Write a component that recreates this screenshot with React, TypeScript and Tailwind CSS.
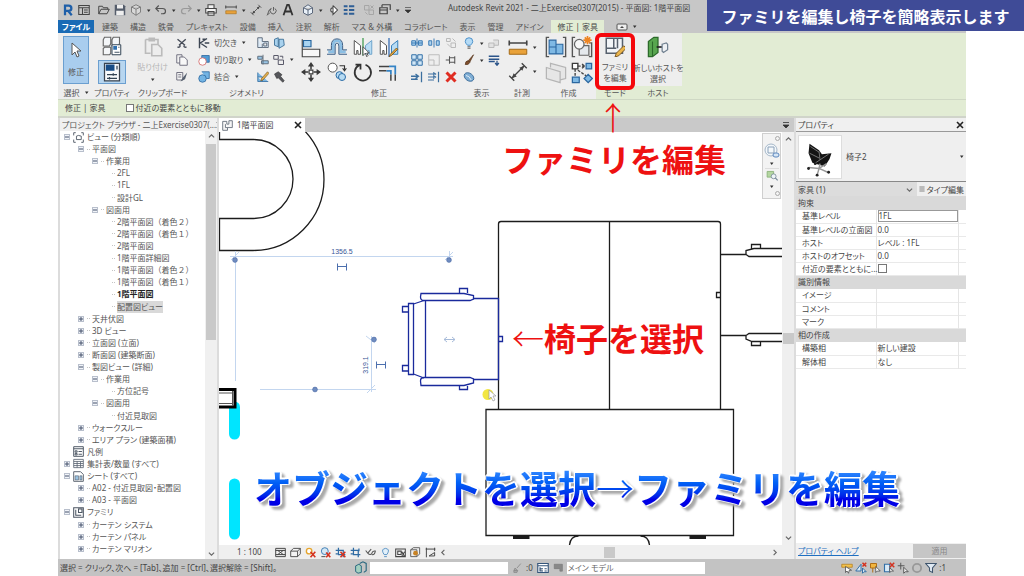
import type { ReactNode } from "react";

const icons: Record<string, ReactNode> = {
    revit: <path d="M4 15V2h5a3 3 0 0 1 0 7H4m4 0 5 6" fill="none" stroke="#1f5fa8" strokeWidth="3" />,
    window: <path d="M1 2h14v12H1zM1 5h14M6 5v9M8 8h5M8 11h5" fill="none" stroke="#444" strokeWidth="1.4" />,
    open: <path d="M1 13V3h5l1 2h6v2M1 13l3-6h11l-3 6z" fill="none" stroke="#444" strokeWidth="1.3" />,
    save: (
        <>
            <path d="M1 1h12l2 2v12H1z" fill="#555d6b" />
            <path d="M4 1h8v5H4zM3 9h10v6H3z" fill="#eee" />
        </>
    ),
    cube: <path d="M8 1l6 3v7l-6 4-6-4V4zM2 4l6 3 6-3M8 7v8" fill="#d8d8d8" stroke="#777" strokeWidth="1.2" />,
    home: <path d="M8 1l6 4v7l-6 3-6-3V5zM2 5l6 3 6-3M8 8v7" fill="#e8f0f8" stroke="#4f5b70" strokeWidth="1.2" />,
    undo: <path d="M5 2L1 6l4 4M1 6h9q4 0 4 3.500T10 13H8" fill="none" stroke="#555" strokeWidth="1.6" />,
    redo: <path d="M11 2l4 4-4 4M15 6H6q-4 0-4 3.500T6 13h2" fill="none" stroke="#999" strokeWidth="1.6" />,
    print: <path d="M4 6V1h8v5M1 6h14v6H1zM4 10h8v5H4z" fill="#f3f3f3" stroke="#444" strokeWidth="1.4" />,
    ruler: (
        <>
            <path d="M1 4h14M1 2v4M15 2v4" fill="none" stroke="#444" strokeWidth="1.3" />
            <path d="M1 9h14v4H1z" fill="#e9a23a" stroke="#a46b18" strokeWidth=".8" />
        </>
    ),
    measure: (
        <>
            <path d="M3 13L13 3M1 11l4 4M11 1l4 4" fill="none" stroke="#444" strokeWidth="1.100" />
            <path d="M3 13l1.500-4 2.500 2.500zM13 3L9 4.500 11.500 7z" fill="#444" />
        </>
    ),
    tag: <path d="M2 14q2-8 5-8M12 6a4 4 0 1 1-5 0M10 4v5M1 15l4-3" fill="none" stroke="#555" strokeWidth="1.2" />,
    textA: <path d="M2 15L7 1h2l5 14M4 10h8" fill="none" stroke="#333" strokeWidth="2.4" />,
    section: <path d="M8 2l6 6-6 6V2M8 5a3 3 0 1 0 0 6" fill="#fff" stroke="#444" strokeWidth="1.4" />,
    thin: <path d="M1 3h5M8 3h7M1 8h5M8 8h7M1 13h5M8 13h7" fill="none" stroke="#2f5f96" strokeWidth="2.4" />,
    closeHidden: <path d="M2 2h6v6H2zM8 8h6v6H8zM10 2l4 4M14 2l-4 4M3 11l3 3" fill="none" stroke="#a5a5a5" strokeWidth="1.3" />,
    switchWin: <path d="M4 1h11v7M4 1v3M1 5h10v8H1zM1 8h10" fill="none" stroke="#444" strokeWidth="1.6" />,
    cursor: <path d="M4 1v12l3-3 2 5 2-1-2-5h4z" fill="#fff" stroke="#555" strokeWidth="1" />,
    cubes: (
        <>
            <path d="M1 3l1-2h5v5L6 8H1zM8 3l1-2h5v5l-1 2H8zM1 10l1-1h5v5l-1 1H1z" fill="#f4f6f8" stroke="#666" strokeWidth=".9" />
            <path d="M8 7h7v8H8z" fill="#fff" stroke="#345" strokeWidth=".8" />
            <path d="M9 8h3v3H9z" fill="#2f6fae" />
            <path d="M10 13h4M13 9h1" stroke="#456" strokeWidth=".8" />
        </>
    ),
    props: (
        <>
            <path d="M2 1h12v14H2z" fill="#f7fafc" stroke="#39434f" strokeWidth="1" />
            <path d="M3 2h7v5H3z" fill="#174c86" />
            <path d="M12 3v3M4 10h8M4 13h8M9 9v2M6 12v2" stroke="#345" strokeWidth="1" />
        </>
    ),
    paste: <path d="M2 2h10v4M2 2v11h4M5 1h4v2H5zM7 6h5l3 3v6H7z" fill="#ededed" stroke="#bbb" strokeWidth="1.3" />,
    cut: <path d="M2 3l10 8M13 3L4 11M2 13a2 1.500 0 1 0 3-2M14 13a2 1.500 0 1 1-3-2" fill="none" stroke="#454b57" strokeWidth="1.8" />,
    copyDoc: <path d="M1 1h7v3M1 1v11h4M5 4h6l4 4v7H5z" fill="#f8f8f8" stroke="#667" strokeWidth="1.2" />,
    match: (
        <>
            <path d="M1 2h8v10H1zM3 5h4M3 8h4" fill="#f4f4f4" stroke="#667" strokeWidth="1.2" />
            <path d="M15 2l-6 7-3 5 6-3z" fill="#56606f" />
        </>
    ),
    cope: <path d="M2 1v14M3 8l9-6M3 8l9 6M6 3h4M9 8h6" fill="none" stroke="#3d4653" strokeWidth="1.9" />,
    cutGeo: (
        <>
            <path d="M5 2h10v9H5z" fill="#4f9bd4" stroke="#27629a" />
            <circle cx="6" cy="10" r="5" fill="#fff" stroke="#cf5a5a" />
        </>
    ),
    join: (
        <>
            <path d="M5 1h10v9h-4" fill="#73b4e4" stroke="#27629a" />
            <circle cx="6" cy="10" r="5" fill="#73b4e4" stroke="#27629a" />
        </>
    ),
    wallOpen: <path d="M1 1h6v5h8v8H7V9M1 1v13h6M9 8v4h4V8z" fill="#dceaf6" stroke="#4b5a6c" strokeWidth="1.1" />,
    split: <path d="M2 3l5-2v12l-5-2zM8 3h6l1 8-7 4z" fill="#a9d2ee" stroke="#31668f" strokeWidth="1.1" />,
    beam: <path d="M1 3h6v4H1zM6 9h9v4H6zM8 1v13" fill="#98c5e6" stroke="#596675" strokeWidth="1.2" />,
    paint: <path d="M1 2h6v5H1zM7 8h7v6H7zM9 3h4v3" fill="#eee" stroke="#556" strokeWidth="1.3" />,
    demo: (
        <>
            <path d="M1 2v12h14M1 8h6v6" fill="#7eb7e2" stroke="#28659c" />
            <path d="M14 1L6 10l-1 3 3-1 8-9z" fill="#e5b04a" stroke="#6a4a1a" strokeWidth=".8" />
        </>
    ),
    hammer: <path d="M2 4l5-3 5 4-2 2 5 6-2 2-6-6-2 1z" fill="#55565b" stroke="#333" strokeWidth=".8" />,
    align: (
        <>
            <path d="M1 1v14M1 9h14v6H1z" fill="#f7f7f7" stroke="#444" strokeWidth=".9" />
            <path d="M2 2h6v5H2z" fill="#a9d4f1" stroke="#25649c" strokeWidth=".9" />
        </>
    ),
    offset: (
        <>
            <path d="M1 11h4V6q0-4 3-4t3 4v5h4" fill="none" stroke="#8cbfe4" strokeWidth="2.200" />
            <path d="M0 9.500h3.500V6q0-5.300 4.500-5.300T12.500 6v3.500H16M0 13h6.500V6.500Q6.500 4 8 4t1.500 2.500V13H16" fill="none" stroke="#3c5f86" strokeWidth=".8" />
        </>
    ),
    mirrorPick: (
        <>
            <path d="M1 2l5 4v7H4v-3H3v3H1z" fill="#fff" stroke="#555" strokeWidth=".8" />
            <path d="M15 2l-5 4v7h2v-3h1v3h2z" fill="#b9ddf4" stroke="#6ea4cc" strokeWidth=".8" />
            <path d="M8 0v14" stroke="#3d9a4d" strokeWidth="1" />
            <path d="M8 7v7l2-2 1 3 1-1-1-2h2z" fill="#fff" stroke="#444" strokeWidth=".7" />
        </>
    ),
    mirrorDraw: (
        <>
            <path d="M1 2l5 4v7H4v-3H3v3H1z" fill="#fff" stroke="#555" strokeWidth=".8" />
            <path d="M15 2l-5 4v7h5z" fill="#b9ddf4" stroke="#3a83bd" strokeWidth=".8" />
            <path d="M8 0v15" stroke="#3169b0" strokeWidth="1" />
            <path d="M14 8l-5 5-1 2 2-1 5-5z" fill="#e7a93b" stroke="#6a4a1a" strokeWidth=".6" />
        </>
    ),
    move: (
        <>
            <path d="M8 2v4M8 10v4M2 8h4M10 8h4" stroke="#3a3a3a" strokeWidth="1.200" />
            <path d="M8 0l2.500 3.500h-5zM8 16l2.500-3.500h-5zM0 8l3.500-2.500v5zM16 8l-3.500-2.500v5z" fill="#3a3a3a" />
            <path d="M6.500 6.500h3v3h-3z" fill="#fff" stroke="#3a3a3a" strokeWidth=".9" />
        </>
    ),
    copy: (
        <>
            <circle cx="4.500" cy="4.500" r="3.600" fill="#fff" stroke="#555" strokeWidth=".8" />
            <path d="M10 3h4v3M12.500 5l1.500 2 1.500-2" fill="none" stroke="#333" strokeWidth=".9" />
            <circle cx="10" cy="10.500" r="2.800" fill="#b7dbf3" stroke="#2b6ca6" strokeWidth=".8" />
            <circle cx="12" cy="12" r="2.800" fill="#b7dbf3" stroke="#2b6ca6" strokeWidth=".8" />
        </>
    ),
    rotate: <path d="M5 2.500a6.500 6.500 0 1 0 5-.3M2 2h4v4" fill="none" stroke="#333" strokeWidth="1.400" />,
    trim: (
        <>
            <path d="M0 3.500h8M0 7h6" stroke="#444" strokeWidth="1.200" />
            <path d="M8 3.500h5V10M6 7h3.500v3" fill="none" stroke="#3584c6" strokeWidth="1.400" />
            <path d="M13 10v5M9.500 10v5" stroke="#444" strokeWidth="1.200" />
        </>
    ),
    splitEl: <path d="M1 5h5v6H1zM10 5h5v6h-5zM8 2v12M1 8h14" fill="#aed5f0" stroke="#3a79b4" strokeWidth="1.300" />,
    splitGap: <path d="M1 5h4v6H1zM11 5h4v6h-4zM8 2v12" fill="#aed5f0" stroke="#3a79b4" strokeWidth="1.300" />,
    unpinGray: <path d="M2 2h5v4H2zM8 8h6v6H8zM3 9l4 4M10 2l4 4" fill="none" stroke="#b8b8b8" strokeWidth="1.300" />,
    array: <path d="M1 1h6v6H1zM9 1h6v6H9zM1 9h6v6H1zM9 9h6v6H9z" fill="#d2e7f6" stroke="#2d6da6" strokeWidth="1.300" />,
    scale: <path d="M1 1h14v14H1zM1 8h7v7" fill="none" stroke="#bbb" strokeWidth="1.300" />,
    pin: <path d="M1 8h5M6 3v10M6 5h7v6H6M13 3v10" fill="none" stroke="#555" strokeWidth="1.400" />,
    trimOne: <path d="M0 7h9M0 11h9M6 4l4 3-4 3M14 1v14" fill="none" stroke="#3c6f9f" strokeWidth="1.700" />,
    trimMany: <path d="M0 4h8M0 8h8M0 12h8M7 2l3 2-3 2M7 6l3 2-3 2M14 1v14" fill="none" stroke="#3c6f9f" strokeWidth="1.600" />,
    del: <path d="M2 2l12 12M14 2L2 14" stroke="#e02d22" strokeWidth="4" />,
    bulb: (
        <>
            <path d="M6 11q-3-3-3-5a5 5 0 0 1 10 0q0 2-3 5z" fill="#b5dbf6" stroke="#4a90c8" strokeWidth="1.300" />
            <path d="M6 13h4M6 15h4" stroke="#555" strokeWidth="1.200" />
        </>
    ),
    boxesGray: <path d="M1 8h7v6H1zM7 4h7v7H8" fill="#e2e2e2" stroke="#b5b5b5" strokeWidth="1.200" />,
    brush: <path d="M14 1l-7 8 2 2zM7 9q-4 0-4 5 5 1 6-3z" fill="#80502d" stroke="#5b3a22" strokeWidth="1" />,
    lines: <path d="M1 3h14M1 7h14M1 10h8M12 9v5M9.500 12l2.500 3 2.500-3" fill="none" stroke="#2b548a" strokeWidth="1.700" />,
    ball: (
        <>
            <ellipse cx="8" cy="8" rx="7" ry="5" transform="rotate(35 8 8)" fill="#7faed4" stroke="#2d5f90" />
            <path d="M4 6q4 0 7 6" fill="none" stroke="#fff" />
        </>
    ),
    createA: (
        <>
            <path d="M3 1H1v14h2M13 1h2v14h-2" fill="none" stroke="#555" strokeWidth="1" />
            <path d="M3 3h5v5H3zM8 6h5v7H8zM3 8h5v5H3z" fill="#7fb9e4" stroke="#2b67a0" strokeWidth=".8" />
        </>
    ),
    createB: (
        <>
            <path d="M3 1H1v14h2M13 5h2v10h-2" fill="none" stroke="#555" strokeWidth="1" />
            <path d="M6 7h7v7H6z" fill="#e5e9ed" stroke="#666" strokeWidth=".9" />
            <circle cx="6" cy="6" r="3.500" fill="#f7f7f7" stroke="#666" strokeWidth=".9" />
            <path d="M12 0v6M9 3h6M10 1l4 4M14 1l-4 4" stroke="#ee8522" strokeWidth="1.200" />
        </>
    ),
    createC: <path d="M1 4l10 3v8L1 12zM4 4V1l11 3v8l-4 1" fill="#e6e6e6" stroke="#b5b5b5" strokeWidth=".9" />,
    createD: (
        <>
            <path d="M1 1h4v4H1z" fill="#fff" stroke="#3b3b3b" strokeWidth="1" />
            <path d="M11 1h4v4h-4zM12.500 9l3 3-3 3-3-3zM1 11h5v4H1z" fill="#7fb9e4" stroke="#2b67a0" strokeWidth=".9" />
            <path d="M5 3h6M3 5v6M5 6l6 4M8 1.500l2 1.500-2 1.500" fill="none" stroke="#444" strokeWidth="1" strokeDasharray="2 1" />
        </>
    ),
    editFamily: (
        <>
            <path d="M1 1h13v12H1zM7 1v8M1 9h8M10 1v8" fill="#f2f5f8" stroke="#56606d" strokeWidth="1.200" />
            <path d="M15 7l-6 6-1 3 3-1 6-6z" fill="#eab54b" stroke="#6e4d1c" strokeWidth=".7" />
        </>
    ),
    host: (
        <>
            <path d="M1 4l4-3h3v11l-4 3H1z" fill="#58a64f" stroke="#2c6a2b" strokeWidth=".9" />
            <path d="M4 4v11" stroke="#2c6a2b" strokeWidth=".8" />
            <path d="M7 8h4" stroke="#222" strokeWidth="1.200" />
            <path d="M11 6l3-1 1 1v4l-3 2-1-1z" fill="#eef1f4" stroke="#708090" strokeWidth=".9" />
        </>
    ),
    views: <path d="M1 5V1h3M12 1h3v4M1 11v4h3M12 15h3v-4M5 6l3-1 4 1v5H5z" fill="none" stroke="#4c5663" strokeWidth="1.300" />,
    legend: <path d="M1 1h14v14H1zM1 4h14M3 7h3v2H3zM3 11h3v2H3zM8 8h5M8 12h5" fill="none" stroke="#4c5663" strokeWidth="1.400" />,
    schedule: <path d="M1 2h14v12H1zM1 5h14M1 8h14M1 11h14M6 5v9M11 5v9" fill="none" stroke="#5c6673" strokeWidth="1.200" />,
    sheet: (
        <>
            <path d="M1 1h10l4 4v10H1z" fill="#fff" stroke="#4c5663" strokeWidth="1.300" />
            <path d="M3 7h5v6H3zM10 7h3v6h-3z" fill="#9bc3e2" stroke="#4c5663" strokeWidth=".8" />
        </>
    ),
    family: <path d="M1 1h14v14H1zM4 4v8h8M8 3h5v5H8z" fill="none" stroke="#4c5663" strokeWidth="1.500" />,
    planTab: <path d="M1 2h6v4h3V1h5v10H8v4H1zM5 6v5h3" fill="#f6f6f6" stroke="#5b6572" strokeWidth="1.200" />,
    detail: <path d="M1 2h14v12H1zM1 5h14M1 11h14M4 5l8 6M12 5l-8 6" fill="#eee" stroke="#444" strokeWidth="1.400" />,
    box: <path d="M1 6h10v8H1zM1 6l4-4h10v8l-4 4M11 6l4-4" fill="#f4f4f4" stroke="#444" strokeWidth="1.300" />,
    sunOff: (
        <>
            <circle cx="6" cy="6" r="4" fill="#fff" stroke="#e6a52e" strokeWidth="2" />
            <path d="M8 7l7 8M15 7l-7 8" stroke="#d4321f" strokeWidth="2.300" />
        </>
    ),
    shadowOff: (
        <>
            <circle cx="7" cy="6" r="5" fill="#d5e8f5" stroke="#3d7db5" strokeWidth="1.400" />
            <path d="M2 14h6" stroke="#555" strokeWidth="1.500" />
            <path d="M9 8l6 7M15 8l-6 7" stroke="#d4321f" strokeWidth="2.300" />
        </>
    ),
    cropOff: (
        <>
            <path d="M5 1v10h10M1 5h11v10M1 10h3" fill="none" stroke="#2f6ba3" strokeWidth="1.800" />
            <path d="M8 7l7 8M15 7l-7 8" stroke="#d4321f" strokeWidth="2.200" />
        </>
    ),
    crop: <path d="M5 1v10h10M1 5h11v10M1 10h3M13 2v4" fill="none" stroke="#2f6ba3" strokeWidth="1.800" />,
    glasses: <path d="M1 5l3 4q4 4 6 0 1-4 5-3-1 6-5 5M4 9L9 3" fill="none" stroke="#555" strokeWidth="1.500" />,
    reveal: <path d="M6 11q-4-6-1-8 3-2 6 0 3 2-1 8zM6 14h4" fill="#e2f0fa" stroke="#5a93c4" strokeWidth="1.400" />,
    camera: <path d="M1 3h14v11H1zM4 6h5v5H4zM10 7l4 7M14 7l-4 6" fill="none" stroke="#444" strokeWidth="1.500" />,
    analytical: (
        <>
            <path d="M1 4l4-3h9v9l-4 4H1zM1 4h9v10" fill="#eee" stroke="#555" strokeWidth="1.300" />
            <circle cx="8" cy="9" r="3.500" fill="#c88326" />
        </>
    ),
    constraint: <path d="M1 3h14M2 1v14M14 1v5M6 13h8V8z" fill="none" stroke="#444" strokeWidth="1.400" />,
    worksets: (
        <>
            <path d="M2 6l4-2 3 2v8l-4 1-3-2z" fill="#a3d0c0" stroke="#29687f" strokeWidth="1.200" />
            <path d="M7 3l4-2 4 2v9l-3 2" fill="none" stroke="#29687f" strokeWidth="1.400" />
        </>
    ),
    editable: <path d="M14 1L8 8M3 12h6M3 12l2-4 4 4-1 3H3z" fill="#aaa" stroke="#888" strokeWidth="1.300" />,
    options: <path d="M1 2h14v12H1zM1 5h14M4 7v5h4M4 9h4M10 9h3M10 12h3" fill="#fff" stroke="#34557a" strokeWidth="1.500" />,
    optionAdd: <path d="M2 2h13v11h-4V9H2z" fill="#888" stroke="#777" />,
    links: (
        <>
            <path d="M1 3h14v4H1z" fill="#f2c14b" stroke="#b47c1b" />
            <path d="M6 6v8l2-2 2 3 1-4h3z" fill="#fff" stroke="#444" />
        </>
    ),
    underlay: (
        <>
            <path d="M1 12L8 3v9zM10 8v7l2-2h3z" fill="#d8eaf7" stroke="#326ea6" strokeWidth="1.300" />
            <path d="M10 1l5 5M15 1l-5 5" stroke="#d4321f" strokeWidth="2" />
        </>
    ),
    pinSel: (
        <>
            <path d="M2 2h8v6H2zM5 8v6" fill="#f1b53f" stroke="#b06d12" strokeWidth="1.300" />
            <path d="M9 6v8l2-2h4z" fill="#fff" stroke="#444" />
        </>
    ),
    faceSel: (
        <>
            <path d="M2 3h7v10H2z" fill="#d8eaf7" stroke="#326ea6" strokeWidth="1.500" />
            <path d="M9 1l6 6M15 1L9 7" stroke="#d4321f" strokeWidth="2" />
            <path d="M9 8v6l2-2h3z" fill="#fff" stroke="#444" />
        </>
    ),
    drag: <path d="M5 1v9M1 5h9M9 7v8l2-2h4z" fill="#f5f5f5" stroke="#555" strokeWidth="1.300" />,
    circle: <circle cx="8" cy="8" r="5.500" fill="none" stroke="#999" strokeWidth="2.500" />,
    filter: <path d="M1 2h14l-5 6v6l-4-2V8z" fill="#dfe9f2" stroke="#3f556d" strokeWidth="1.400" />,
};

const Icon = ({ name, className = "size-3" }: { name: string; className?: string }) => (
    <svg viewBox="0 0 16 16" className={`${className} block shrink-0`} aria-hidden="true">
        {icons[name]}
    </svg>
);

const Caret = () => (
    <svg viewBox="0 0 5 5" className="size-[5px] block shrink-0" aria-hidden="true">
        <path d="M1 1.500h3.500L2.700 4z" fill="#333" />
    </svg>
);

const Close = ({ label }: { label: string }) => (
    <button aria-label={label} className="shrink-0">
        <svg viewBox="0 0 8 8" className="size-2 block">
            <path d="M1 1l6 6M7 1L1 7" stroke="#222" strokeWidth="1.600" />
        </svg>
    </button>
);

const Tool = ({ name, size }: { name: string; size?: string }) => (
    <button aria-label={name}>
        <Icon name={name} className={size} />
    </button>
);

const quickAccess: [string, string][] = [
    ["revit", ""], ["window", ""], ["open", "ml-1"], ["save", ""], ["cube", ""], ["|", ""],
    ["undo", ""], ["|", ""], ["redo", ""], ["|", ""], ["print", ""], ["ruler", "ml-1"], ["|", ""],
    ["measure", ""], ["tag", ""], ["textA", ""], ["home", "ml-1"], ["|", ""], ["section", ""],
    ["thin", ""], ["closeHidden", "ml-1"], ["switchWin", ""], ["|", ""],
];

const TitleBar = () => (
    <header className="flex items-center h-5 bg-[#c7c7c7] pl-1">
        <div className="flex items-center gap-1">
            {quickAccess.map(([name, cls], i) =>
                name === "|" ? (
                    <Caret key={i} />
                ) : (
                    <button key={i} aria-label={name} className={cls}>
                        <Icon name={name} />
                    </button>
                )
            )}
            <button aria-label="クイック アクセス ツールバーをカスタマイズ">
                <svg viewBox="0 0 8 8" className="size-2">
                    <path d="M1 1.500h6M1 4h6L4 7z" fill="#333" stroke="#333" strokeWidth=".6" />
                </svg>
            </button>
        </div>
        <h1 className="ml-9 pb-1 text-[8px] leading-3 text-[#444] whitespace-nowrap">
            Autodesk Revit 2021 - 二上Exercise0307(2015) - 平面図: 1階平面図
        </h1>
    </header>
);

const tabs = ["建築", "構造", "鉄骨", "プレキャスト", "設備", "挿入", "注釈", "解析", "マス & 外構", "コラボレート", "表示", "管理", "アドイン"];

const TabBar = () => (
    <nav className="flex h-[13px] bg-[#c7c7c7] text-[8px] leading-[13px] text-[#555] whitespace-nowrap">
        <button className="w-9 bg-[#1a6bb5] text-white font-bold text-center">ファイル</button>
        <div className="flex gap-3 pl-2">
            {tabs.map((tab) => (
                <button key={tab}>{tab}</button>
            ))}
        </div>
        <button className="ml-2 px-[6px] bg-[#e2ecd4] text-[#444]">修正 | 家具</button>
        <button aria-label="リボン表示" className="ml-3 flex items-center gap-1">
            <svg viewBox="0 0 12 8" className="w-3 h-2">
                <rect x="1" y="1" width="10" height="6" rx="1" fill="#eee" stroke="#555" />
                <path d="M4 5l2-2 2 2z" fill="#444" />
            </svg>
            <Caret />
        </button>
    </nav>
);

const Group = ({ label, width, green, caret, children }: { label: string; width: string; green?: boolean; caret?: boolean; children: ReactNode }) => (
    <div className={`${width} shrink-0 flex flex-col ${green ? "bg-[#e2ecd4]" : "bg-[#eeeeee]"}`}>
        <div className="h-[53px] flex items-center justify-center bg-[#eeeeee]">{children}</div>
        <div className="flex items-center justify-center gap-1 h-[13px] text-[8px] leading-3 text-[#555] whitespace-nowrap">
            {label}
            {caret && <Caret />}
        </div>
    </div>
);

const Stack = ({ names }: { names: string[] }) => (
    <div className="flex flex-col gap-[5px]">
        {names.map((name) => (
            <Tool key={name} name={name} />
        ))}
    </div>
);

const geometry = [
    { icon: "cope", label: "切欠き" },
    { icon: "cutGeo", label: "切り取り" },
    { icon: "join", label: "結合" },
];

const Ribbon = () => (
    <section className="flex h-[67px] bg-[#e2ecd4] border-b border-[#cfd8c4] text-[8px] text-[#555]">
        <Group label="選択" width="w-9" caret>
            <button className="w-[26px] h-[48px] flex flex-col items-center justify-center gap-2 bg-[#a9cdee] border border-[#6b9fd0]">
                <Icon name="cursor" className="size-4" />
                修正
            </button>
        </Group>
        <Group label="プロパティ" width="w-9">
            <div className="flex flex-col items-center gap-1">
                <Tool name="cubes" size="size-5" />
                <button aria-label="プロパティ" className="px-[3px] py-[1px] bg-[#b7d6f0] border border-[#6b9fd0]">
                    <Icon name="props" className="size-5" />
                </button>
            </div>
        </Group>
        <Group label="クリップボード" width="w-[65px]">
            <div className="flex items-center gap-2">
                <button className="flex flex-col items-center gap-1 text-[#b5b5b5]">
                    <Icon name="paste" className="size-5" />
                    貼り付け
                    <Caret />
                </button>
                <Stack names={["cut", "copyDoc", "match"]} />
            </div>
        </Group>
        <Group label="ジオメトリ" width="w-[103px]">
            <div className="w-full flex items-center justify-between pl-[3px] pr-1">
                <div className="flex flex-col gap-[5px]">
                    {geometry.map((g) => (
                        <button key={g.icon} className="flex items-center gap-1 h-3 whitespace-nowrap">
                            <Icon name={g.icon} />
                            {g.label}
                            <Caret />
                        </button>
                    ))}
                </div>
                <div className="flex items-center gap-1">
                    <Stack names={["wallOpen", "beam", "demo"]} />
                    <Stack names={["split", "paint", "hammer"]} />
                    <Caret />
                </div>
            </div>
        </Group>
        <Group label="修正" width="w-[162px]">
            <div className="flex items-center gap-3">
                <div className="grid grid-cols-4 gap-x-[6px] gap-y-1">
                    {["align", "offset", "mirrorPick", "mirrorDraw", "move", "copy", "rotate", "trim"].map((name) => (
                        <Tool key={name} name={name} size="size-5" />
                    ))}
                </div>
                <div className="grid grid-cols-3 gap-[5px]">
                    {["splitEl", "splitGap", "unpinGray", "array", "scale", "pin", "trimOne", "trimMany", "del"].map((name) => (
                        <Tool key={name} name={name} />
                    ))}
                </div>
            </div>
        </Group>
        <Group label="表示" width="w-[43px]">
            <div className="flex items-start gap-1">
                <Stack names={["bulb", "brush", "ball"]} />
                <div className="flex flex-col gap-3 pt-1">
                    <Caret />
                    <Caret />
                </div>
                <Stack names={["boxesGray", "lines"]} />
            </div>
        </Group>
        <Group label="計測" width="w-[38px]">
            <div className="flex flex-col gap-1">
                {["ruler", "measure"].map((name) => (
                    <button key={name} aria-label={name} className="flex items-center gap-1">
                        <Icon name={name} className="size-5" />
                        <Caret />
                    </button>
                ))}
            </div>
        </Group>
        <Group label="作成" width="w-[55px]">
            <div className="grid grid-cols-2 gap-1">
                {["createA", "createB", "createC", "createD"].map((name) => (
                    <Tool key={name} name={name} size="size-[22px]" />
                ))}
            </div>
        </Group>
        <Group label="モード" width="w-[38px]" green>
            <button className="flex flex-col items-center leading-[11px]">
                <Icon name="editFamily" className="size-5 mb-1" />
                <span>ファミリ</span>
                <span>を編集</span>
            </button>
        </Group>
        <Group label="ホスト" width="w-[48px]" green>
            <button className="flex flex-col items-center leading-[11px] whitespace-nowrap">
                <Icon name="host" className="size-[22px] mb-1" />
                <span>新しいホストを</span>
                <span>選択</span>
            </button>
        </Group>
    </section>
);

const OptionsBar = () => (
    <div className="flex items-center h-[18px] pl-[7px] gap-5 bg-[#e2ecd4] border-b-2 border-[#d0d4ca] text-[8px] text-[#444]">
        <span>修正 | 家具</span>
        <label className="flex items-center gap-[2px]">
            <input type="checkbox" className="appearance-none size-2 bg-white border border-[#777]" />
            付近の要素とともに移動
        </label>
    </div>
);

type Node = { depth: number; label: string; open?: boolean; icon?: string; bold?: boolean; selected?: boolean };

const tree: Node[] = [
    { depth: 0, label: "ビュー (分類順)", open: true, icon: "views" },
    { depth: 1, label: "平面図", open: true },
    { depth: 2, label: "作業用", open: true },
    { depth: 3, label: "2FL" },
    { depth: 3, label: "1FL" },
    { depth: 3, label: "設計GL" },
    { depth: 2, label: "図面用", open: true },
    { depth: 3, label: "2階平面図（着色２）" },
    { depth: 3, label: "2階平面図（着色１）" },
    { depth: 3, label: "2階平面図" },
    { depth: 3, label: "1階平面詳細図" },
    { depth: 3, label: "1階平面図（着色２）" },
    { depth: 3, label: "1階平面図（着色１）" },
    { depth: 3, label: "1階平面図", bold: true },
    { depth: 3, label: "配置図ビュー", selected: true },
    { depth: 1, label: "天井伏図", open: false },
    { depth: 1, label: "3D ビュー", open: false },
    { depth: 1, label: "立面図 (立面)", open: false },
    { depth: 1, label: "断面図 (建築断面)", open: false },
    { depth: 1, label: "製図ビュー (詳細)", open: true },
    { depth: 2, label: "作業用", open: true },
    { depth: 3, label: "方位記号" },
    { depth: 2, label: "図面用", open: true },
    { depth: 3, label: "付近見取図" },
    { depth: 1, label: "ウォークスルー", open: false },
    { depth: 1, label: "エリア プラン (建築面積)", open: false },
    { depth: 0, label: "凡例", icon: "legend" },
    { depth: 0, label: "集計表/数量 (すべて)", open: false, icon: "schedule" },
    { depth: 0, label: "シート (すべて)", open: true, icon: "sheet" },
    { depth: 1, label: "A02 - 付近見取図・配置図", open: false },
    { depth: 1, label: "A03 - 平面図", open: false },
    { depth: 0, label: "ファミリ", open: true, icon: "family" },
    { depth: 1, label: "カーテン システム", open: false },
    { depth: 1, label: "カーテン パネル", open: false },
    { depth: 1, label: "カーテン マリオン", open: false },
];

const indents = ["pl-1", "pl-[18px]", "pl-8", "pl-[43px]"];

const TreeRow = ({ node }: { node: Node }) => (
    <li className={`flex items-center h-3 ${indents[node.depth]}`}>
        <span className="w-[9px] shrink-0 flex items-center">
            {node.open !== undefined && (
                <button aria-label={node.label} className="size-[6px] bg-[#f1f4f9] border border-[#b8bfcc]">
                    <svg viewBox="0 0 4 4" className="size-1 block">
                        <path d={node.open ? "M0 2h4" : "M0 2h4M2 0v4"} stroke="#44516b" strokeWidth="1" />
                    </svg>
                </button>
            )}
        </span>
        {node.icon ? <Icon name={node.icon} className="size-[11px] mr-[3px]" /> : <span className="w-[3px] mr-[2px] border-t border-dotted border-[#c4c4c4]" />}
        <span
            className={`whitespace-nowrap ${node.bold ? "font-bold text-[#222]" : ""} ${node.selected ? "bg-[#d9d9d9]" : ""} ${node.label.includes("（") ? "[font-feature-settings:normal]" : ""}`}
        >
            {node.label}
        </span>
    </li>
);

const Chevron = ({ d }: { d: string }) => (
    <svg viewBox="0 0 8 8" className="size-[7px] block shrink-0" aria-hidden="true">
        <path d={d} fill="none" stroke="#666" strokeWidth="1.300" />
    </svg>
);

const ProjectBrowser = () => (
    <aside className="w-[159px] shrink-0 flex flex-col bg-white border-l-2 border-[#dcdcdc]">
        <div className="flex items-center justify-between h-[13px] px-[2px] bg-[#f0f0f0] text-[8px] text-[#555] whitespace-nowrap">
            <h2>プロジェクト ブラウザ - 二上Exercise0307(...</h2>
            <Close label="プロジェクト ブラウザを閉じる" />
        </div>
        <div className="flex flex-1">
            <ul className="flex-1 flex flex-col justify-between pb-1 text-[8px] leading-3 text-[#555]">
                {tree.map((node, i) => (
                    <TreeRow key={i} node={node} />
                ))}
            </ul>
            <div className="w-3 flex flex-col items-center justify-between bg-[#f0f0f0] py-[2px]">
                <Chevron d="M1 5l3-3 3 3" />
                <div className="w-[10px] flex-1 pt-1">
                    <div className="h-[196px] bg-[#c9c9c9]" />
                </div>
                <Chevron d="M1 3l3 3 3-3" />
            </div>
        </div>
    </aside>
);

const Drawing = () => (
    <svg viewBox="219 132 563 413" preserveAspectRatio="xMinYMin slice" className="flex-1 min-w-0 h-[413px] bg-white" fill="none">
        <g stroke="#1c1c1c" strokeWidth="1.300">
            <path d="M219.500 132v7.500H253.500A39.500 39.500 0 0 1 253.500 218.500H219.500V250.500H253a71 71 0 0 0 0-142" />
            <path d="M498.500 409V224q0-2.500 2.500-2.500H718q2.500 0 2.500 2.500V409M609.500 222V409" />
            <path d="M486 409.500H733.500V535.500H486z" />
            <path d="M720.500 292.500H716.500V297.500H720.500" />
            <path d="M720.500 254.500H746M782 248.500H754L746 250.500V254.500L749 256.500H782M751.500 248.500V244.500H760.500V248.500" />
            <path d="M720.500 335.500H746M782 333.500H749L746 335.500V339L752 341.500H782M751.500 341.500V345.500H760.500V341.500" />
            <path d="M569.500 545q1-9 9-9M649.500 545q-1-9-9-9" />
        </g>
        <path d="M513 537.500H529.500M689.500 537.500H706" stroke="#1c1c1c" strokeWidth="3" />
        <path d="M234.500 407V434M234.500 484V534" stroke="#00e5ff" strokeWidth="11" strokeLinecap="round" />
        <path d="M219 389.500H235V407H219" fill="#fff" stroke="#000" strokeWidth="3" />
        <path d="M219 393H232M219 403.500H232M232.500 391V406" stroke="#555" strokeWidth="1" />
        <g stroke="#c3d6ef" strokeWidth="1">
            <path d="M230 256.500H453M235.500 251V381M449.500 251V262M260 389.500H376M371.500 336V392M231 260l8-8M445 260l8-8M367 393l8-8M366 336l9 7" />
        </g>
        <g stroke="#4c6fae" strokeWidth="1">
            <path d="M337.500 263.500v7M346.500 263.500v7M338 266.500h8M376.500 361.500v7M385.500 361.500v7M377 364.500h8" />
            <path d="M444 339.500h11M447 337l-3 2.500 3 2.500M452 337l3 2.500-3 2.500" stroke="#a7bbd9" />
        </g>
        <g fill="#6f8cc0" stroke="#4a68a4" strokeWidth=".6">
            <circle cx="235" cy="260" r="2.400" />
            <circle cx="449" cy="260" r="2.400" />
            <circle cx="374" cy="339.500" r="2.400" />
            <circle cx="315" cy="389.500" r="2.400" />
        </g>
        <g stroke="#1a2a9c" strokeWidth="1.300">
            <path d="M421 293.500H464L473.500 295.500V299L470 300.500H424Q420.500 300.500 420.500 297z" />
            <path d="M421 385.500H464L473.500 383V379L470 377.500H424Q420.500 377.500 420.500 381z" />
            <path d="M459.500 293V288.500H467.500V293M459.500 386V389.500H467.500V386" />
            <path d="M473 298.500H498.500V379.500H473M499 336.500H502.500V341.500H499" />
            <path d="M408.500 303.500H413.500V374.500H408.500zM408.500 306.500H402.500V312H408.500M408.500 365.500H402.500V371H408.500" />
            <path d="M413.500 304L424 300.500M413.500 374L424 378M425.500 300.500V378" />
        </g>
        <g fill="#3a5796" fontSize="7" fontFamily="Liberation Sans, sans-serif" textAnchor="middle">
            <text x="342" y="254">1356.5</text>
            <text transform="translate(368 365) rotate(-90)">319.1</text>
        </g>
        <circle cx="488" cy="394.500" r="5.500" fill="#f2e643" />
        <path d="M489 390v9l2-2 2 4 2-1-2-4h3z" fill="#fff" stroke="#999" strokeWidth=".7" />
    </svg>
);

const NavBar = () => (
    <div className="absolute right-[13px] top-[1px] w-[19px] h-[66px] flex flex-col items-center justify-between py-[2px] bg-[#f3f3f3] border border-[#cfcfcf]">
        <span className="self-end size-[5px] rounded-full border border-[#aaa]" />
        <svg viewBox="0 0 16 16" className="size-4">
            <circle cx="7" cy="7" r="6" fill="#f4f8fb" stroke="#a5b7c9" />
            <path d="M4 4h6v6H4z" fill="none" stroke="#8aa0b8" />
            <rect x="9" y="10" width="6" height="4" rx="2" fill="#d5e5f5" stroke="#5b86bd" />
        </svg>
        <Caret />
        <svg viewBox="0 0 16 16" className="size-[14px] border-t border-[#ddd]">
            <path d="M2 3h8v7H2z" fill="#b4d6a1" stroke="#86af74" />
            <circle cx="10" cy="9" r="3" fill="#eef4f8" stroke="#789" />
            <path d="M12 11l3 3" stroke="#789" strokeWidth="1.500" />
        </svg>
        <Caret />
        <span className="self-end size-[5px] rounded-full border border-[#aaa]" />
    </div>
);

const viewTools = ["detail", "box", "sunOff", "shadowOff", "cropOff", "crop", "glasses", "reveal", "camera", "analytical", "constraint"];

const ViewArea = () => (
    <main className="flex-1 min-w-0 flex flex-col border-l-2 border-[#dcdcdc]">
        <div className="flex justify-between h-[14px] bg-[#c9c9c9] pr-1">
            <div className="w-[86px] flex items-center gap-1 px-[3px] bg-white text-[8px] text-[#444]">
                <Icon name="planTab" className="size-[11px]" />
                <span className="flex-1">1階平面図</span>
                <Close label="1階平面図を閉じる" />
            </div>
            <button aria-label="タブ一覧">
                <svg viewBox="0 0 8 8" className="size-2">
                    <path d="M1 1.500h6M1 4h6L4 7z" fill="#333" stroke="#333" strokeWidth=".8" />
                </svg>
            </button>
        </div>
        <div className="relative flex flex-1">
            <Drawing />
            <NavBar />
            <div className="w-3 shrink-0 flex flex-col items-center justify-between py-1 bg-[#efefef]">
                <Chevron d="M1 5l3-3 3 3" />
                <div className="w-[11px] h-[11px] bg-[#c9c9c9]" />
                <Chevron d="M1 3l3 3 3-3" />
            </div>
        </div>
        <div className="flex items-center h-[14px] pl-[18px] pr-4 bg-[#efefef] text-[8px] text-[#444]">
            <span className="w-[38px]">1 : 100</span>
            <div className="flex items-center gap-1">
                {viewTools.map((name) => (
                    <Tool key={name} name={name} size="size-[11px]" />
                ))}
                <Chevron d="M5 1L2 4l3 3" />
            </div>
            <div className="flex-1 flex justify-center">
                <div className="w-[11px] h-[11px] bg-[#c9c9c9]" />
            </div>
            <Chevron d="M3 1l3 3-3 3" />
        </div>
    </main>
);

const sections = [
    {
        title: "拘束",
        rows: [["基準レベル", "1FL"], ["基準レベルの立面図", "0.0"], ["ホスト", "レベル : 1FL"], ["ホストのオフセット", "0.0"], ["付近の要素とともに...", "check"]],
    },
    { title: "識別情報", rows: [["イメージ", ""], ["コメント", ""], ["マーク", ""]] },
    { title: "相の作成", rows: [["構築相", "新しい建設"], ["解体相", "なし"]] },
];

const PropertyValue = ({ label, value }: { label: string; value: string }) => {
    if (value === "check") return <input type="checkbox" aria-label={label} className="block appearance-none size-[9px] bg-white border border-[#777]" />;
    if (value === "1FL") return <input aria-label={label} defaultValue={value} className="block w-full h-3 border border-[#999] bg-white outline-none" />;
    return <>{value}</>;
};

const Properties = () => (
    <aside className="w-[172px] shrink-0 flex flex-col border-l-2 border-[#dcdcdc] bg-white text-[8px] text-[#444]">
        <div className="flex items-center justify-between h-[14px] px-[2px] bg-[#f0f0f0] border-b border-[#999]">
            <h2>プロパティ</h2>
            <Close label="プロパティを閉じる" />
        </div>
        <div className="flex items-center h-[50px] px-[2px] gap-1 bg-[#efefef] border-b border-[#888]">
            <svg viewBox="0 0 44 44" className="size-11 bg-white border border-[#ddd]">
                <path d="M11 8l10 7 3 4 10-1-2 6-5 8-13-4-4-10z" fill="#141414" />
                <path d="M12 11l9 6M11 18l10 5M21 16l1 9 9-6M22 25l-6 4" stroke="#777" fill="none" />
                <path d="M22 29l-1 5M21 34l-11-1M21 34l-2 7M21 34l9 4M21 34l8-5" stroke="#999" strokeWidth="1.500" fill="none" />
                <g fill="#222">
                    <circle cx="10" cy="34" r="1.500" />
                    <circle cx="19" cy="41" r="1.500" />
                    <circle cx="31" cy="38" r="1.500" />
                    <circle cx="17" cy="29" r="1.500" />
                </g>
            </svg>
            <span className="flex-1">椅子2</span>
            <Caret />
        </div>
        <div className="flex h-[14px] bg-[#dcdcdc] leading-[13px]">
            <div className="relative flex-1">
                <select aria-label="家具" className="w-full h-[14px] pl-[2px] appearance-none bg-transparent outline-none">
                    <option>家具 (1)</option>
                </select>
                <span className="absolute right-1 top-1">
                    <Chevron d="M1 3l3 3 3-3" />
                </span>
            </div>
            <button className="flex items-center gap-[2px] px-[2px] bg-[#efefef] whitespace-nowrap">
                <svg viewBox="0 0 6 6" className="size-[6px]">
                    <path d="M0 1h6M0 3h6M0 5h6M2 0v6M4 0v6" stroke="#888" strokeWidth=".6" />
                </svg>
                タイプ編集
            </button>
        </div>
        <table className="w-full table-fixed border-collapse leading-3">
            <colgroup>
                <col className="w-20" />
                <col />
                <col className="w-2" />
            </colgroup>
            {sections.map((section) => (
                <tbody key={section.title}>
                    <tr className="h-[14px] bg-[#d9d9d9]">
                        <th colSpan={3} className="p-0 pl-[2px] text-left font-normal">
                            {section.title}
                        </th>
                    </tr>
                    {section.rows.map(([label, value]) => (
                        <tr key={label} className="h-[13px] border-b border-[#e9e9e9]">
                            <td className="p-0 pl-[6px] whitespace-nowrap">{label}</td>
                            <td className="p-0 pl-px border-x border-[#e5e5e5]">
                                <PropertyValue label={label} value={value} />
                            </td>
                            <td className="p-0" />
                        </tr>
                    ))}
                </tbody>
            ))}
        </table>
        <div className="mt-auto flex items-center justify-between h-4 pl-[2px] bg-[#f0f0f0]">
            <a href="#help" className="text-[#1f6fc0] underline">
                プロパティ ヘルプ
            </a>
            <button className="w-[53px] h-[14px] bg-[#c6c6c6] text-[#888]">適用</button>
        </div>
    </aside>
);

const StatusBar = () => (
    <footer className="flex items-center h-[17px] pl-[2px] pr-5 bg-[#c3c3c3] text-[8px] text-[#444] whitespace-nowrap">
        <p className="w-[294px] shrink-0">選択 = クリック、次へ = [Tab]、追加 = [Ctrl]、選択解除 = [Shift]。</p>
        <Icon name="worksets" className="size-[13px]" />
        <select aria-label="ワークセット" className="ml-[3px] w-[138px] h-3 bg-white appearance-none" />
        <div className="flex items-center gap-1 px-1">
            <Icon name="editable" className="size-[10px]" />
            <span>:0</span>
            <Icon name="options" />
            <Icon name="optionAdd" className="size-[10px]" />
        </div>
        <select aria-label="デザイン オプション" className="w-[138px] h-3 bg-white appearance-none pl-px text-[#666]">
            <option>メイン モデル</option>
        </select>
        <div className="ml-auto flex items-center gap-[2px]">
            {["links", "underlay", "pinSel", "faceSel", "drag", "circle", "filter"].map((name) => (
                <Tool key={name} name={name} />
            ))}
            <span>:1</span>
        </div>
    </footer>
);

const Captions = () => (
    <div className="font-['Noto_Sans_CJK_JP',sans-serif] [font-feature-settings:normal] whitespace-nowrap pointer-events-none">
        <div className="absolute right-0 top-0 w-[317px] h-[31px] flex items-center justify-center bg-[#3f4b97] text-white text-[16px] font-bold">
            ファミリを編集し椅子を簡略表示します
        </div>
        <div className="absolute left-[595px] top-[33px] w-[40px] h-[57px] border-4 border-[#f5070c] rounded-md" />
        <p className="absolute left-[597px] top-[100px] text-[32px] leading-8 font-light text-[#ee1111]">↑</p>
        <p className="absolute left-[502px] top-[142px] text-[32px] leading-8 font-bold text-[#ee1111]">ファミリを編集</p>
        <p className="absolute left-[512px] top-[321px] text-[32px] leading-8 font-bold text-[#ee1111]">
            <span className="font-light">←</span>椅子を選択
        </p>
        <div className="absolute left-[254px] top-[467px] [filter:drop-shadow(1px_1px_0_#fff)_drop-shadow(-1px_-1px_0_#fff)_drop-shadow(1px_-1px_0_#fff)_drop-shadow(3px_3px_1px_#a9a9a9)]">
            <p className="text-[38px] leading-10 font-bold text-transparent bg-clip-text bg-linear-to-b from-[#2f86ff] from-10% to-[#0000e6] to-80%">
                オブジェクトを選択<span className="font-light">→</span>ファミリを編集
            </p>
        </div>
    </div>
);

const App = () => (
    <div className="relative min-h-screen px-[58px] bg-white font-['Noto_Sans','Noto_Sans_CJK_JP',sans-serif] [font-feature-settings:'palt']">
        <div className="min-h-screen flex flex-col">
            <TitleBar />
            <TabBar />
            <Ribbon />
            <OptionsBar />
            <div className="flex flex-1">
                <ProjectBrowser />
                <ViewArea />
                <Properties />
            </div>
            <StatusBar />
        </div>
        <Captions />
    </div>
);

export default App;
